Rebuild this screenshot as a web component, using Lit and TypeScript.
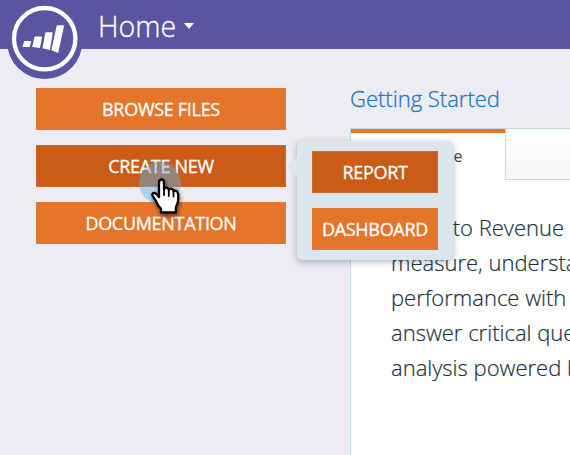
import { LitElement, html, css, svg } from "lit";
import { customElement } from "lit/decorators.js";

@customElement("brand-logo")
class BrandLogo extends LitElement {
  static styles = css`
    :host { display: block; width: 76px; height: 80px; }
    .logo { display: block; }
  `;
  render() {
    return html`<svg class="logo" width="76" height="80" viewBox="0 0 76 80">
      <circle cx="37.7" cy="41.5" r="37.6" fill="#5b55a1" />
      <circle cx="37.7" cy="38.7" r="30.7" fill="#5b55a1" stroke="#fff" stroke-width="4.3" />
      ${svg`<g fill="#fff">
        <path d="M18 41H23.2Q24.2 41 24 42L22.7 47H15.4L16.9 42Q17.1 41 18 41Z" />
        <path d="M28.4 36.5H34.2Q35.2 36.5 35 37.5L32.9 48L25.2 47.1L27.4 37.5Q27.6 36.5 28.4 36.5Z" />
        <path d="M39.2 32.3H44.8Q45.9 32.3 45.7 33.3L42.9 50L35.5 48.3L38.2 33.3Q38.4 32.3 39.2 32.3Z" />
        <path d="M50.6 25.2H56Q57.2 25.2 57 26.3L51.2 53L44.4 50.3L49.5 26.2Q49.7 25.2 50.6 25.2Z" />
      </g>`}
    </svg>`;
  }
}

@customElement("hand-pointer")
class HandPointer extends LitElement {
  static styles = css`
    :host { display: block; width: 50px; height: 60px; }
    .pointer { display: block; overflow: visible; filter: drop-shadow(1px 3px 2px rgba(0, 0, 0, 0.5)); }
    .halo { position: absolute; left: 0; top: 0; width: 42px; height: 42px; border-radius: 50%; background: rgba(88, 177, 235, 0.45); }
    .hand { position: absolute; left: 12px; top: 16px; }
  `;
  render() {
    return html`<div class="halo"></div>
      <div class="hand">
        <svg class="pointer" width="30" height="36" viewBox="0 0 30 36">
          <path
            d="M8 19V4.2Q8 1.5 10.5 1.5Q13 1.5 13 4.2V12Q13.1 9.7 15.2 9.7Q17.7 9.7 17.8 12.3Q18.2 10.6 20 10.7Q22.3 10.8 22.5 13.3Q23 12.3 24.4 12.7Q27.5 13.4 27.2 17.5V22Q26.8 26 24.9 29V34.4H10V30.8Q6.4 27.5 4.7 22.6L1.8 18.2Q.5 15.4 2.6 15Q4.6 14.7 6.4 17Z"
            fill="#fff" stroke="#000" stroke-width="2.3" stroke-linejoin="round" />
          <path d="M13 11V17M17.8 12V18M22.5 13.5V18.5" fill="none" stroke="#000" stroke-width="1.8" stroke-linecap="round" />
        </svg>
      </div>`;
  }
}

@customElement("app-root")
class AppRoot extends LitElement {
  static styles = css`
    :host { display: block; position: relative; width: 570px; height: 455px; overflow: hidden; background: #edecf2; font-family: "Open Sans", sans-serif; }
    .header { display: flex; box-sizing: border-box; height: 49px; padding-left: 98px; background: #5b55a1; color: #fff; border-bottom: 1px solid #615ba6; }
    .title { font-size: 28.5px; font-weight: 300; line-height: 52px; -webkit-text-stroke: 0.3px currentColor; width: 76px; }
    .caret { width: 0; height: 0; margin: 23px 0 0 10px; border: 5.5px solid transparent; border-top: 6.5px solid #fff; border-bottom: 0; }
    .logo { position: absolute; left: 7px; top: 0; }
    .body { display: flex; height: 406px; }
    .actions { display: flex; flex-direction: column; gap: 15px; width: 250px; padding: 39px 64px 0 36px; flex: none; }
    .button { display: flex; align-items: center; justify-content: center; box-sizing: border-box; height: 42px; padding: 0; border: 1px solid #df7a37; background: #e5752a; color: #fff; font: 400 18px "Open Sans", sans-serif; letter-spacing: -0.3px; -webkit-text-stroke: 0.3px currentColor; white-space: nowrap; }
    .button.active { background: #cb5c18; border-color: #cf6a2d; }
    .main { flex: none; width: 400px; display: flex; flex-direction: column; }
    .heading { margin: 0; padding-top: 33px; height: 46px; font-size: 22px; line-height: 32px; font-weight: 300; color: #1c78c0; -webkit-text-stroke: 0.3px currentColor; }
    .panel { flex: 1; background: #fff; border-left: 1px solid #bfd9e5; border-top: 1px solid #bfd9e5; }
    .tabs { display: flex; height: 51px; }
    .tab { box-sizing: border-box; width: 154px; flex: none; border-top: 4px solid #e5752a; font-size: 16px; line-height: 47px; text-align: center; color: #444; }
    .rest { flex: 1; border-left: 1px solid #bfd9e5; border-bottom: 1px solid #bfd9e5; background: linear-gradient(#fff, #f6f6f6); }
    .copy { padding: 30px 0 0 40px; font-size: 22px; font-weight: 300; line-height: 35px; color: #20343b; white-space: nowrap; -webkit-text-stroke: 0.2px currentColor; }
    .lead { display: inline-block; width: 56px; overflow: hidden; vertical-align: top; }
    .menu { position: absolute; left: 297px; top: 141px; width: 126px; height: 99px; padding: 10px 15px; display: flex; flex-direction: column; gap: 15px; border-radius: 5px; background: #dce6ed; box-shadow: 0 2px 7px rgba(40, 50, 70, 0.35); }
    .menu::before { content: ""; position: absolute; left: -10px; top: 16px; border: 10px solid transparent; border-right-color: #dce6ed; border-left: 0; }
    .cursor { position: absolute; left: 139px; top: 162px; }
  `;
  render() {
    return html`
      <header class="header"><span class="title">Home</span><span class="caret"></span></header>
      <brand-logo class="logo"></brand-logo>
      <div class="body">
        <nav class="actions">
          <button class="button">BROWSE FILES</button>
          <button class="button active">CREATE NEW</button>
          <button class="button">DOCUMENTATION</button>
        </nav>
        <main class="main">
          <h1 class="heading">Getting Started</h1>
          <section class="panel">
            <div class="tabs"><div class="tab">Welcome</div><div class="rest"></div></div>
            <div class="copy">
              <div><span class="lead">Welcome</span> to Revenue</div>
              <div>measure, understand</div>
              <div>performance with</div>
              <div>answer critical questions</div>
              <div>analysis powered by</div>
            </div>
          </section>
        </main>
      </div>
      <div class="menu">
        <button class="button active">REPORT</button>
        <button class="button">DASHBOARD</button>
      </div>
      <hand-pointer class="cursor"></hand-pointer>
    `;
  }
}
